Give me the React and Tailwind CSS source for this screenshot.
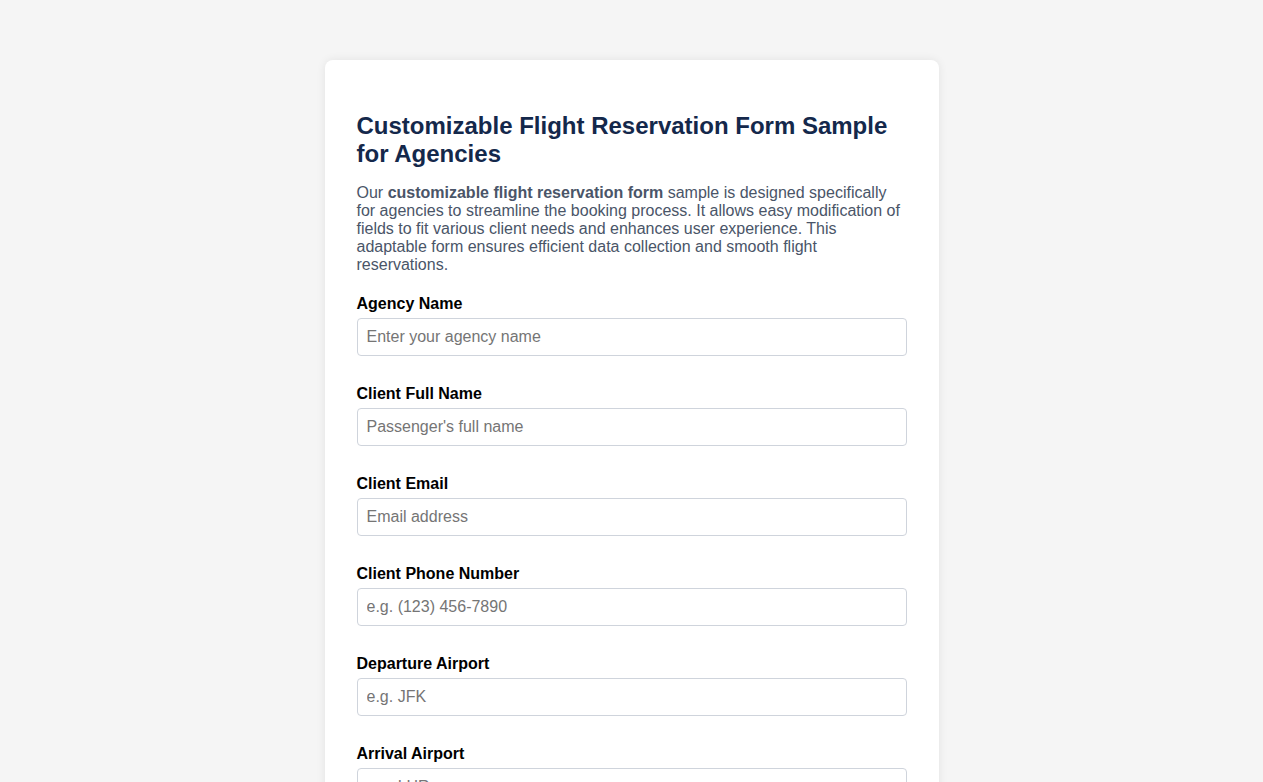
import React from "react";

const fields = [
    { label: "Agency Name", placeholder: "Enter your agency name", type: "text" },
    { label: "Client Full Name", placeholder: "Passenger's full name", type: "text" },
    { label: "Client Email", placeholder: "Email address", type: "email" },
    { label: "Client Phone Number", placeholder: "e.g. (123) 456-7890", type: "tel" },
    { label: "Departure Airport", placeholder: "e.g. JFK", type: "text" },
    { label: "Arrival Airport", placeholder: "e.g. LHR", type: "text" },
    { label: "Departure Date", placeholder: "", type: "date" },
]

export default function App() {
    return (
        <div className="min-h-screen bg-[#f5f5f5] pt-[60px] pb-10 font-['Liberation_Sans',Arial,sans-serif]">
            <div className="mx-auto w-[614px] rounded-lg bg-white px-8 pt-[52px] pb-8 shadow-[0_0_10px_rgba(0,0,0,0.08)]">
                <h1 className="text-[24px] font-bold leading-[28px] text-[#14284b]">
                    Customizable Flight Reservation Form Sample for Agencies
                </h1>
                <p className="mt-[16px] text-[16px] leading-[18px] text-[#4a5568]">
                    Our <strong>customizable flight reservation form</strong> sample is designed specifically for agencies to streamline the booking process. It allows easy modification of fields to fit various client needs and enhances user experience. This adaptable form ensures efficient data collection and smooth flight reservations.
                </p>
                <form className="mt-[21px] flex flex-col gap-[29px]">
                    {fields.map(f => (
                        <div key={f.label}>
                            <label className="mb-[5px] block text-[16px] font-bold leading-[18px] text-black">{f.label}</label>
                            <input
                                type={f.type}
                                placeholder={f.placeholder}
                                className="block h-[38px] w-full rounded-[4px] border border-[#cfd4dc] px-[9px] text-[16px] text-[#333] placeholder:text-[#757575] outline-none"
                            />
                        </div>
                    ))}
                </form>
            </div>
        </div>
    )
}
